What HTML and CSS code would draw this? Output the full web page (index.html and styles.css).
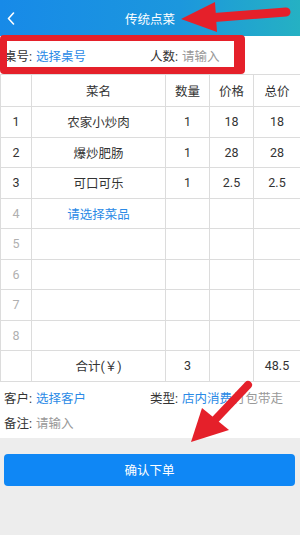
FILE: index.html
```html
<!DOCTYPE html>
<html lang="zh">
<head>
<meta charset="utf-8">
<title>传统点菜</title>
<link rel="stylesheet" href="styles.css">
</head>
<body>
<div class="page">
  <header class="topbar">
    <span class="back">
      <svg width="8" height="13" viewBox="0 0 8 13"><path d="M6.5 1 L1.5 6.5 L6.5 12" fill="none" stroke="#fff" stroke-width="1.6" stroke-linecap="round" stroke-linejoin="round"/></svg>
    </span>
    <h1 class="title">传统点菜</h1>
    <span></span>
  </header>

  <section class="info">
    <div class="field"><span class="label">桌号:</span><span class="val link">选择桌号</span></div>
    <div class="field"><span class="label">人数:</span><span class="val hint">请输入</span></div>
  </section>

  <table class="dishes">
    <colgroup><col class="c-idx"><col class="c-name"><col class="c-qty"><col class="c-price"><col class="c-total"></colgroup>
    <thead>
      <tr><th></th><th>菜名</th><th>数量</th><th>价格</th><th>总价</th></tr>
    </thead>
    <tbody>
      <tr><td class="idx">1</td><td>农家小炒肉</td><td>1</td><td>18</td><td>18</td></tr>
      <tr><td class="idx">2</td><td>爆炒肥肠</td><td>1</td><td>28</td><td>28</td></tr>
      <tr><td class="idx">3</td><td>可口可乐</td><td>1</td><td>2.5</td><td>2.5</td></tr>
      <tr><td class="idx empty">4</td><td class="link">请选择菜品</td><td></td><td></td><td></td></tr>
      <tr><td class="idx empty">5</td><td></td><td></td><td></td><td></td></tr>
      <tr><td class="idx empty">6</td><td></td><td></td><td></td><td></td></tr>
      <tr><td class="idx empty">7</td><td></td><td></td><td></td><td></td></tr>
      <tr><td class="idx empty">8</td><td></td><td></td><td></td><td></td></tr>
      <tr><td></td><td>合计(￥)</td><td>3</td><td></td><td>48.5</td></tr>
    </tbody>
  </table>

  <section class="extra">
    <div class="field"><span class="label">客户:</span><span class="val link">选择客户</span></div>
    <div class="field"><span class="label">类型:</span><span class="val link">店内消费</span><span class="val2 hint">打包带走</span></div>
    <div class="field"><span class="label">备注:</span><span class="val hint">请输入</span></div>
  </section>

  <div class="actions">
    <button class="submit">确认下单</button>
  </div>

  <div class="mark-box"></div>
  <svg class="arrows" width="300" height="535" viewBox="0 0 300 535">
    <line x1="286" y1="12" x2="208" y2="18" stroke="#e5202a" stroke-width="9" stroke-linecap="round"/>
    <polygon points="181,19 215,2 217,32" fill="#e5202a"/>
    <line x1="248" y1="385" x2="212" y2="423" stroke="#e5202a" stroke-width="8" stroke-linecap="round"/>
    <polygon points="191,442 202,408 229,430" fill="#e5202a"/>
  </svg>
</div>
</body>
</html>
```

FILE: styles.css
```css
* { box-sizing: border-box; }
html, body { margin: 0; padding: 0; }
body {
  width: 300px;
  height: 535px;
  overflow: hidden;
  font-family: Roboto, "Noto Sans CJK SC", sans-serif;
  font-size: 12.5px;
  color: #333;
  background: #ededed;
}
.page {
  position: relative;
  width: 300px;
  height: 535px;
}
.topbar {
  height: 36px;
  display: grid;
  grid-template-columns: 36px 1fr 36px;
  align-items: center;
  background: linear-gradient(90deg, #178ae8 0%, #1c97dd 60%, #25b1c3 100%);
}
.back {
  display: flex;
  align-items: center;
  padding-left: 7px;
  padding-top: 1px;
}
.title {
  margin: 0;
  text-align: center;
  color: #fff;
  font-size: 12.5px;
  font-weight: normal;
}
.info {
  height: 38px;
  background: #fff;
  display: grid;
  grid-template-columns: 146px 1fr;
  align-items: center;
  padding-left: 4px;
}
.field { white-space: nowrap; }
.label { color: #333; }
.val { margin-left: 4px; }
.val2 { margin-left: 1px; }
.link { color: #2b8ae6; }
.hint { color: #999; }
.dishes {
  width: 300px;
  table-layout: fixed;
  border-collapse: collapse;
  background: #fff;
}
.c-idx { width: 31px; }
.c-name { width: 134px; }
.c-qty { width: 44px; }
.c-price { width: 44px; }
.c-total { width: 47px; }
.dishes th, .dishes td {
  border: 1px solid #dcdcdc;
  padding: 0;
  text-align: center;
  font-weight: normal;
  color: #333;
}
.dishes thead tr { height: 32px; }
.dishes tbody tr { height: 30.5px; }
.dishes td.empty { color: #b0b0b0; }
.dishes td.link { color: #2b8ae6; }
.extra {
  background: #fff;
  padding: 3px 0 3px 4px;
  display: grid;
  grid-template-columns: 146px 1fr;
  grid-auto-rows: 25px;
  align-items: center;
}
.actions {
  padding: 16px 5px 0 4px;
}
.submit {
  display: block;
  width: 100%;
  height: 32px;
  border: 0;
  border-radius: 4px;
  background: #0f87f5;
  color: #fff;
  font-family: Roboto, "Noto Sans CJK SC", sans-serif;
  font-size: 12.5px;
}
.mark-box {
  position: absolute;
  left: 0;
  top: 35px;
  width: 245px;
  height: 39px;
  border: 7px solid #e5202a;
  border-right-width: 11px;
  border-top-width: 6px;
  border-radius: 4px;
  pointer-events: none;
}
.arrows {
  position: absolute;
  left: 0;
  top: 0;
  pointer-events: none;
}
```
